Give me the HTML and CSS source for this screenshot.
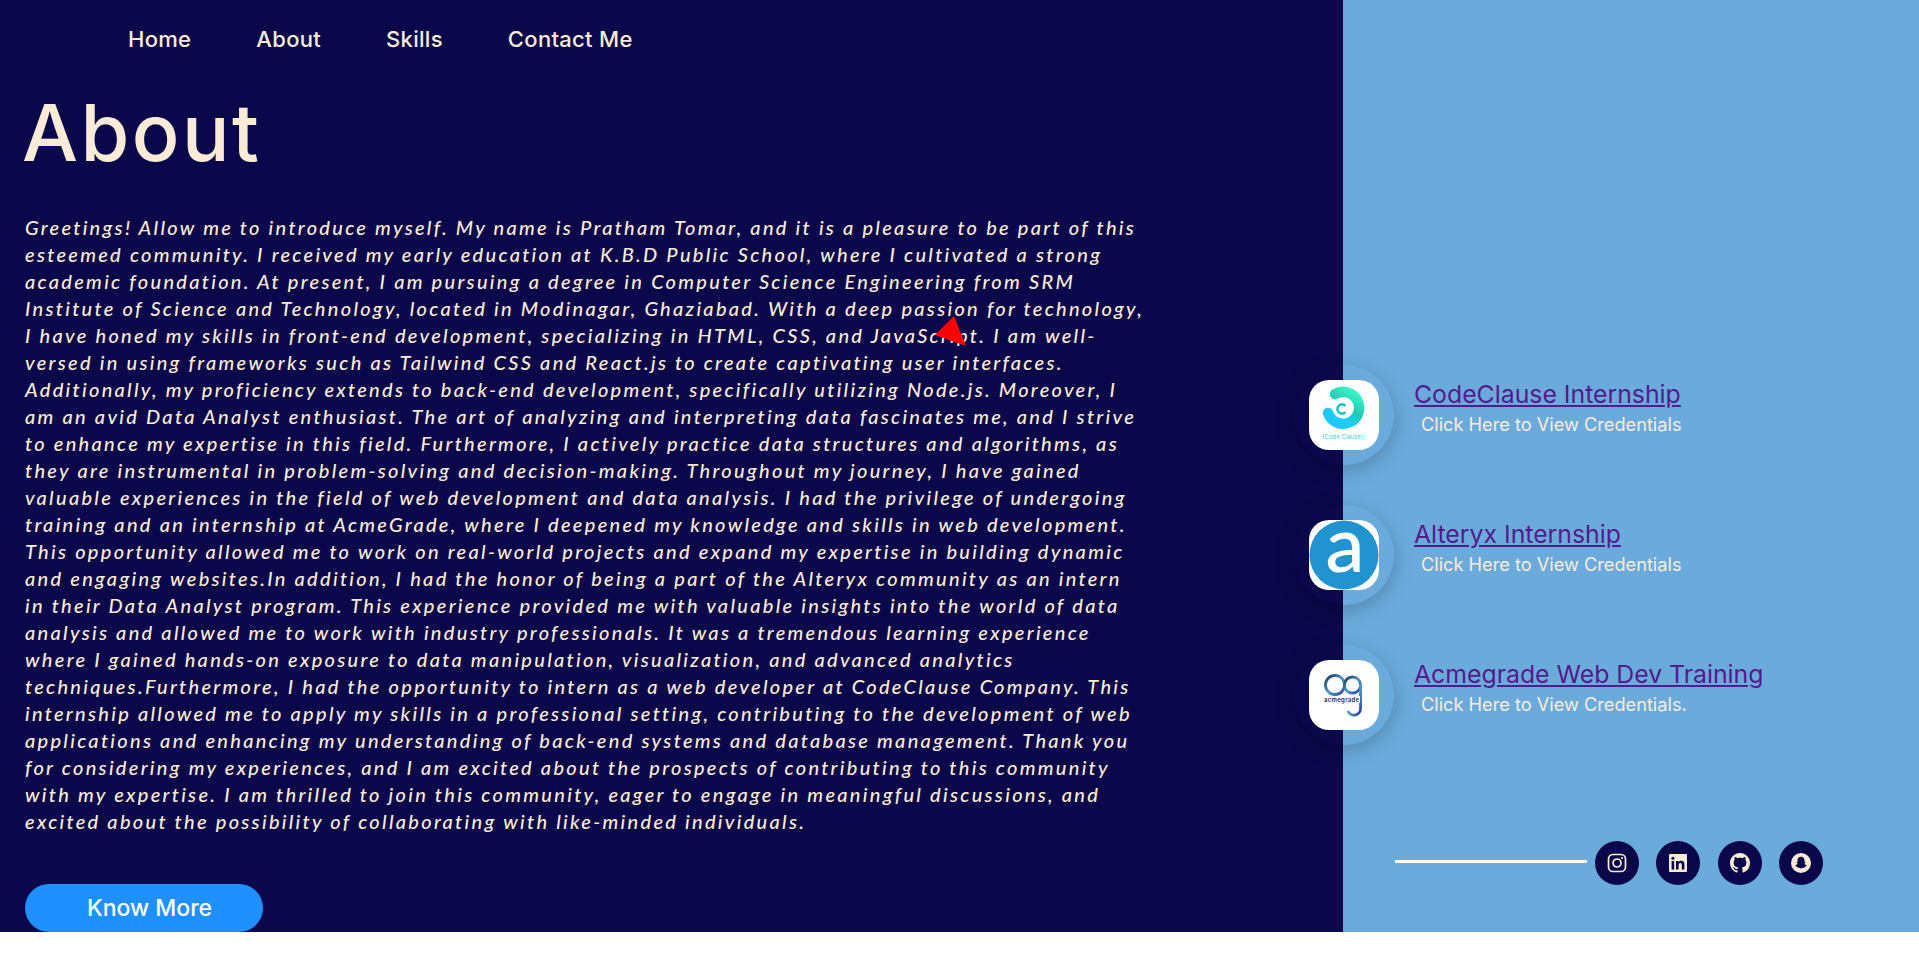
FILE: index.html
```html
<!DOCTYPE html>
<html lang="en">

<head>
    <meta charset="UTF-8">
    <meta name="viewport" content="width=device-width, initial-scale=1.0">
    <title>Pratham Tomar - About</title>
    <link rel="stylesheet" href="styles.css">
</head>

<body>
    <div class="page">

        <!-- LEFT SIDE -->
        <section class="about">
            <nav class="nav">
                <a href="#">Home</a>
                <a href="#">About</a>
                <a href="#">Skills</a>
                <a href="#">Contact Me</a>
            </nav>

            <h1 class="about-title">About</h1>

            <p class="about-text">
                Greetings! Allow me to introduce myself. My name is Pratham Tomar, and it is a pleasure to be part of this<br>
                esteemed community. I received my early education at K.B.D Public School, where I cultivated a strong<br>
                academic foundation. At present, I am pursuing a degree in Computer Science Engineering from SRM<br>
                Institute of Science and Technology, located in Modinagar, Ghaziabad. With a deep passion for technology,<br>
                I have honed my skills in front-end development, specializing in HTML, CSS, and JavaScript. I am well-<br>
                versed in using frameworks such as Tailwind CSS and React.js to create captivating user interfaces.<br>
                Additionally, my proficiency extends to back-end development, specifically utilizing Node.js. Moreover, I<br>
                am an avid Data Analyst enthusiast. The art of analyzing and interpreting data fascinates me, and I strive<br>
                to enhance my expertise in this field. Furthermore, I actively practice data structures and algorithms, as<br>
                they are instrumental in problem-solving and decision-making. Throughout my journey, I have gained<br>
                valuable experiences in the field of web development and data analysis. I had the privilege of undergoing<br>
                training and an internship at AcmeGrade, where I deepened my knowledge and skills in web development.<br>
                This opportunity allowed me to work on real-world projects and expand my expertise in building dynamic<br>
                and engaging websites.In addition, I had the honor of being a part of the Alteryx community as an intern<br>
                in their Data Analyst program. This experience provided me with valuable insights into the world of data<br>
                analysis and allowed me to work with industry professionals. It was a tremendous learning experience<br>
                where I gained hands-on exposure to data manipulation, visualization, and advanced analytics<br>
                techniques.Furthermore, I had the opportunity to intern as a web developer at CodeClause Company. This<br>
                internship allowed me to apply my skills in a professional setting, contributing to the development of web<br>
                applications and enhancing my understanding of back-end systems and database management. Thank you<br>
                for considering my experiences, and I am excited about the prospects of contributing to this community<br>
                with my expertise. I am thrilled to join this community, eager to engage in meaningful discussions, and<br>
                excited about the possibility of collaborating with like-minded individuals.
            </p>

            <a class="btn" href="#">Know More</a>

            <!-- RED CURSOR -->
            <svg class="cursor" width="32" height="31" viewBox="0 0 32 31">
                <polygon points="19,0 0,19 31,30" fill="#ff0000" />
            </svg>
        </section>

        <!-- RIGHT SIDE -->
        <section class="side">
            <div class="cert">
                <div class="cert-ring">
                    <div class="cert-logo">
                        <svg width="70" height="70" viewBox="0 0 70 70">
                            <defs>
                                <linearGradient id="cc" x1="0.8" y1="0" x2="0.2" y2="1">
                                    <stop offset="0" stop-color="#3af2c4" />
                                    <stop offset="0.45" stop-color="#1fc9b4" />
                                    <stop offset="0.75" stop-color="#1dcdf5" />
                                    <stop offset="1" stop-color="#1fc8fb" />
                                </linearGradient>
                            </defs>
                            <path d="M26 14 A16 16 0 1 1 19 33" fill="none" stroke="url(#cc)" stroke-width="10.5" stroke-linecap="round" />
                            <circle cx="33" cy="29" r="8" fill="#fff" />
                            <path d="M36.5 26 A4.6 4.6 0 1 0 36.5 32" fill="none" stroke="#1fc4c8" stroke-width="2.6" />
                            <text x="13" y="59" class="cc-text">{Code Clause};</text>
                        </svg>
                    </div>
                </div>
                <div class="cert-info">
                    <a class="cert-link" href="#">CodeClause Internship</a>
                    <p class="cert-sub">Click Here to View Credentials</p>
                </div>
            </div>

            <div class="cert">
                <div class="cert-ring">
                    <div class="cert-logo">
                        <svg class="logo-open" width="70" height="70" viewBox="0 0 70 70">
                            <circle cx="35" cy="35" r="34.5" fill="#2093d0" />
                            <text x="36" y="52" class="alteryx-text">a</text>
                        </svg>
                    </div>
                </div>
                <div class="cert-info">
                    <a class="cert-link" href="#">Alteryx Internship</a>
                    <p class="cert-sub">Click Here to View Credentials</p>
                </div>
            </div>

            <div class="cert">
                <div class="cert-ring">
                    <div class="cert-logo">
                        <svg width="70" height="70" viewBox="0 0 70 70">
                            <defs>
                                <linearGradient id="ag" x1="0" y1="0" x2="1" y2="1">
                                    <stop offset="0" stop-color="#14305e" />
                                    <stop offset="0.5" stop-color="#4f9cc4" />
                                    <stop offset="1" stop-color="#2a3fa8" />
                                </linearGradient>
                            </defs>
                            <circle cx="26" cy="25" r="9.5" fill="none" stroke="url(#ag)" stroke-width="2.8" />
                            <circle cx="43.5" cy="25" r="8" fill="none" stroke="url(#ag)" stroke-width="2.8" />
                            <path d="M51.5 24 V48 A6.5 6.5 0 0 1 39 51" fill="none" stroke="url(#ag)" stroke-width="2.8" />
                            <rect x="14" y="36" width="37" height="7" fill="#fff" />
                            <text x="15" y="41.5" class="ag-text">acmegrade</text>
                        </svg>
                    </div>
                </div>
                <div class="cert-info">
                    <a class="cert-link" href="#">Acmegrade Web Dev Training</a>
                    <p class="cert-sub">Click Here to View Credentials.</p>
                </div>
            </div>

            <!-- SOCIAL -->
            <div class="social">
                <span class="social-line"></span>
                <a class="social-icon" href="#">
                    <svg width="20" height="20" viewBox="0 0 20 20" fill="none" stroke="#faebd7">
                        <rect x="1.5" y="1.5" width="17" height="17" rx="4.5" stroke-width="1.7" />
                        <circle cx="10" cy="10" r="4" stroke-width="1.7" />
                        <circle cx="15" cy="5" r="1.1" fill="#faebd7" stroke="none" />
                    </svg>
                </a>
                <a class="social-icon" href="#">
                    <svg width="20" height="20" viewBox="0 0 20 20">
                        <rect x="1" y="1" width="18" height="18" rx="1" fill="#faebd7" />
                        <rect x="3.6" y="8" width="2.6" height="8.6" fill="#0a084a" />
                        <circle cx="4.9" cy="5.2" r="1.5" fill="#0a084a" />
                        <path d="M8 8h2.5v1.2c.5-.8 1.4-1.4 2.7-1.4 2.5 0 3.2 1.6 3.2 3.9v4.9h-2.6v-4.3c0-1.1-.2-2.2-1.5-2.2s-1.7 1-1.7 2.1v4.4H8z" fill="#0a084a" />
                    </svg>
                </a>
                <a class="social-icon" href="#">
                    <svg width="20" height="20" viewBox="0 0 16 16" fill="#faebd7">
                        <path d="M8 0C3.58 0 0 3.58 0 8c0 3.54 2.29 6.53 5.47 7.59.4.07.55-.17.55-.38 0-.19-.01-.82-.01-1.49-2.01.37-2.53-.49-2.69-.94-.09-.23-.48-.94-.82-1.13-.28-.15-.68-.52-.01-.53.63-.01 1.08.58 1.23.82.72 1.21 1.87.87 2.33.66.07-.52.28-.87.51-1.07-1.78-.2-3.64-.89-3.64-3.95 0-.87.31-1.59.82-2.15-.08-.2-.36-1.02.08-2.12 0 0 .67-.21 2.2.82.64-.18 1.32-.27 2-.27.68 0 1.36.09 2 .27 1.53-1.04 2.2-.82 2.2-.82.44 1.1.16 1.92.08 2.12.51.56.82 1.27.82 2.15 0 3.07-1.87 3.75-3.65 3.95.29.25.54.73.54 1.48 0 1.07-.01 1.93-.01 2.2 0 .21.15.46.55.38A8.013 8.013 0 0016 8c0-4.42-3.58-8-8-8z" />
                    </svg>
                </a>
                <a class="social-icon" href="#">
                    <svg width="20" height="20" viewBox="0 0 20 20">
                        <circle cx="10" cy="10" r="10" fill="#faebd7" />
                        <path d="M10 3.8c-2.2 0-3.5 1.6-3.5 3.6v1.5l-1.2.4c.3.6 1 .8 1.2 1-.3 1-1.2 2-2.5 2.4.4.6 1.2.7 1.9.9l.3.8c.9 0 1.5.1 2.3.7.5.3 1 .5 1.5.5s1-.2 1.5-.5c.8-.6 1.4-.7 2.3-.7l.3-.8c.7-.2 1.5-.3 1.9-.9-1.3-.4-2.2-1.4-2.5-2.4.2-.2.9-.4 1.2-1l-1.2-.4V7.4c0-2-1.3-3.600-3.5-3.600z" fill="#0a084a" />
                    </svg>
                </a>
            </div>
        </section>
    </div>
</body>

</html>
```

FILE: styles.css
```css
/* RESET */
* {
    margin: 0;
    padding: 0;
    box-sizing: border-box;
}

body {
    background-color: #FFF;
    font-family: Inter, "Open Sans", sans-serif;
}

.page {
    display: flex;
    height: 932px;
    overflow: hidden;
}

/* LEFT SIDE */
.about {
    position: relative;
    width: 1343px;
    padding-left: 25px;
    background-color: #0A084A;
    color: #FAEBD7;
}

.nav {
    display: flex;
    gap: 65px;
    padding: 26px 0 0 103px;
}

.nav a {
    color: #FAEBD7;
    font-size: 22px;
    font-weight: 500;
    letter-spacing: 0.3px;
    line-height: 26px;
    text-decoration: none;
}

.about-title {
    margin: 31px 0 0 -3px;
    font-size: 79px;
    font-weight: 500;
    letter-spacing: 2.5px;
    line-height: 98px;
}

.about-text {
    margin-top: 33px;
    font-family: Lato, sans-serif;
    font-size: 20px;
    font-style: italic;
    font-weight: 500;
    letter-spacing: 2.28px;
    line-height: 27px;
    white-space: nowrap;
}

.btn {
    display: flex;
    align-items: center;
    justify-content: center;
    width: 238px;
    height: 48px;
    margin-top: 49px;
    padding-left: 11px;
    border-radius: 24px;
    background-color: #1E90FF;
    color: #FFF;
    font-size: 23px;
    font-weight: 500;
    text-decoration: none;
}

.cursor {
    position: absolute;
    left: 935px;
    top: 316px;
}

/* RIGHT SIDE */
.side {
    position: relative;
    flex: 1;
    padding-top: 365px;
    background-color: #6BABDC;
}

.cert {
    display: flex;
    gap: 20px;
    height: 100px;
    margin-bottom: 40px;
    margin-left: -49px;
}

.cert-ring {
    display: flex;
    align-items: center;
    justify-content: center;
    width: 100px;
    height: 100px;
    border-radius: 50%;
    box-shadow: 0 5px 20px rgba(0, 0, 0, 0.22);
}

.cert-logo {
    width: 70px;
    height: 70px;
    border-radius: 20px;
    background-color: #FFF;
}

.logo-open {
    overflow: visible;
}

.cc-text {
    fill: #3AD4D0;
    font-family: Inter, sans-serif;
    font-size: 6px;
}

.alteryx-text {
    fill: #FFF;
    font-family: Lato, sans-serif;
    font-size: 78px;
    font-weight: 500;
    text-anchor: middle;
}

.ag-text {
    fill: #1F2A44;
    font-family: Inter, sans-serif;
    font-size: 6px;
    font-weight: 600;
    letter-spacing: 0.3px;
}

.cert-info {
    padding-top: 13px;
}

.cert-link {
    color: #551A8B;
    font-size: 24.8px;
    line-height: 32px;
}

.cert-sub {
    margin: 2px 0 0 7px;
    color: #FAEBD7;
    font-size: 18.2px;
    line-height: 24px;
}

/* SOCIAL */
.social {
    display: flex;
    align-items: center;
    margin: 96px 0 0 52px;
}

.social-line {
    width: 192px;
    height: 3px;
    margin: 0 8px 4px 0;
    background-color: #FFF;
}

.social-icon {
    display: flex;
    align-items: center;
    justify-content: center;
    width: 44px;
    height: 44px;
    margin-right: 17.33px;
    border-radius: 50%;
    background-color: #0A084A;
}
```
